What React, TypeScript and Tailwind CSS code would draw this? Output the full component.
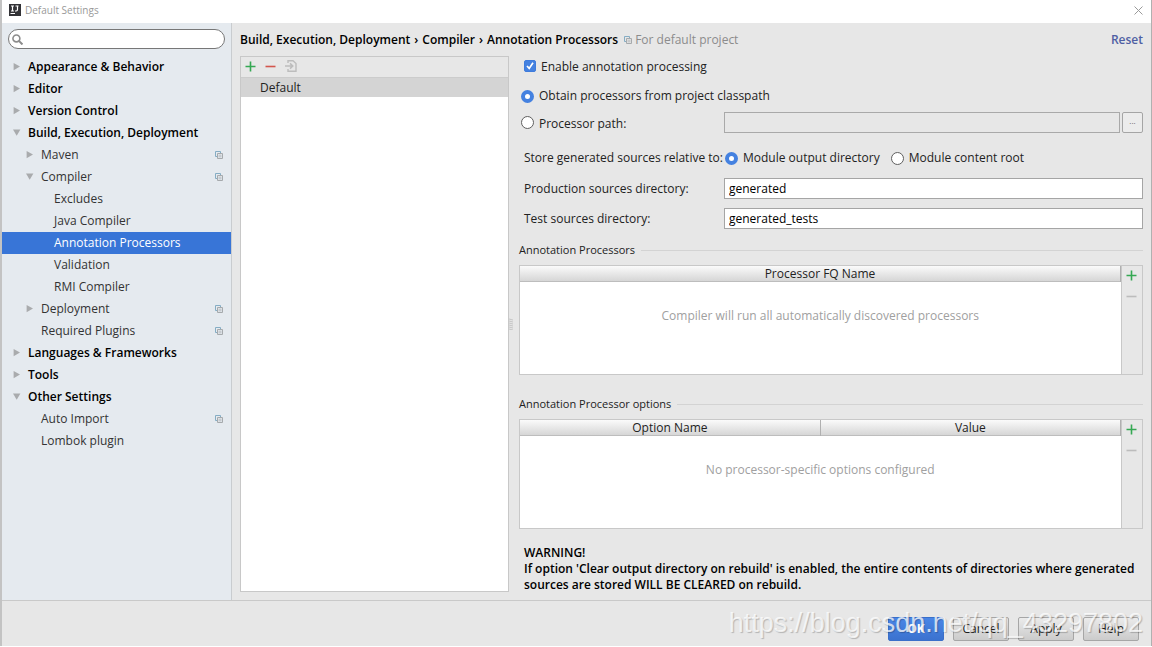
import React, { useState } from 'react';
import { memo, FC } from 'react';

type TreeItem = {
  name: string;
  level: number;
  arrow?: 'open' | 'closed';
  project?: boolean;
};

const treeItems: TreeItem[] = [
  { name: 'Appearance & Behavior', level: 0, arrow: 'closed' },
  { name: 'Editor', level: 0, arrow: 'closed' },
  { name: 'Version Control', level: 0, arrow: 'closed' },
  { name: 'Build, Execution, Deployment', level: 0, arrow: 'open' },
  { name: 'Maven', level: 1, arrow: 'closed', project: true },
  { name: 'Compiler', level: 1, arrow: 'open', project: true },
  { name: 'Excludes', level: 2 },
  { name: 'Java Compiler', level: 2 },
  { name: 'Annotation Processors', level: 2 },
  { name: 'Validation', level: 2 },
  { name: 'RMI Compiler', level: 2 },
  { name: 'Deployment', level: 1, arrow: 'closed', project: true },
  { name: 'Required Plugins', level: 1, project: true },
  { name: 'Languages & Frameworks', level: 0, arrow: 'closed' },
  { name: 'Tools', level: 0, arrow: 'closed' },
  { name: 'Other Settings', level: 0, arrow: 'open' },
  { name: 'Auto Import', level: 1, project: true },
  { name: 'Lombok plugin', level: 1 },
];

const levelPadding = ['pl-[11px]', 'pl-[24px]', 'pl-[37px]'];

const Arrow: FC<{ state?: 'open' | 'closed' }> = ({ state }) => (
  <svg className="w-2 h-2 shrink-0 fill-[#a9abad]" viewBox="0 0 8 8">
    {state === 'open' && <path d="M0 0.4h7.4L3.7 6.8z" />}
    {state === 'closed' && <path d="M0.6 0v7.2L7 3.6z" />}
  </svg>
);

const ProjectIcon: FC = () => (
  <svg className="w-2 h-2 shrink-0" viewBox="0 0 8 8" fill="none">
    <path d="M2 5.5H0.5v-5h5V2" stroke="#85adc4" />
    <path d="M2.5 2.5h5v5h-5z" stroke="#a6aaad" />
    <path d="M3.5 4.2h3M3.5 5.8h3" stroke="#a6aaad" strokeWidth="0.7" />
  </svg>
);

const PlusIcon: FC = () => (
  <svg className="w-[11px] h-[11px]" viewBox="0 0 11 11">
    <path d="M5.5 0.5v10M0.5 5.5h10" stroke="#35a853" strokeWidth="1.6" />
  </svg>
);

const MinusIcon: FC<{ color: string }> = ({ color }) => (
  <svg className="w-[11px] h-[11px]" viewBox="0 0 11 11">
    <path d="M0.5 5.5h10" stroke={color} strokeWidth="1.6" />
  </svg>
);

const radioClass =
  'appearance-none w-[13px] h-[13px] shrink-0 rounded-full border border-[#5f5f5f] bg-white checked:border-[4px] checked:border-[#4481e0]';
const inputClass =
  'w-full min-w-0 h-[21px] px-1 border border-[#a5a5a5] bg-white text-black outline-none';

const SectionTitle: FC<{ title: string }> = ({ title }) => (
  <div className="flex items-center gap-1.5 h-[18px] mb-1.5 text-[11px]">
    <h2>{title}</h2>
    <div className="flex-1 border-t border-[#d3d3d3]" />
  </div>
);

const DataTable: FC<{ columns: string[]; empty: string }> = ({ columns, empty }) => (
  <div className="flex h-[110px] border border-[#c8c8c8]">
    <div className="flex-1 bg-white">
      <table className="w-full table-fixed border-collapse">
        <thead>
          <tr className="h-[15px] bg-linear-to-b from-[#fbfbfb] to-[#d6d6d6] border-b border-[#bdbdbd]">
            {columns.map((column) => (
              <th
                key={column}
                className="p-0 leading-[15px] font-normal border-r border-[#b0b0b0]"
              >
                {column}
              </th>
            ))}
          </tr>
        </thead>
        <tbody>
          <tr>
            <td colSpan={columns.length} className="pt-[26px] text-center text-[#a0a0a0]">
              {empty}
            </td>
          </tr>
        </tbody>
      </table>
    </div>
    <div className="flex flex-col items-center w-[21px] pt-1 pr-0.5 gap-[10px] border-l border-[#c8c8c8]">
      <button aria-label="Add">
        <PlusIcon />
      </button>
      <button aria-label="Remove">
        <MinusIcon color="#bcbcbc" />
      </button>
    </div>
  </div>
);

const TitleBar: FC = () => (
  <header className="flex items-center h-[23px] pl-[7px] pr-2 pb-[3px] bg-white">
    <svg className="w-3 h-3 mr-1" viewBox="0 0 12 12">
      <rect width="12" height="12" fill="#323236" />
      <path
        d="M2 2h3M3.5 2v5M2 7h3M6.5 2h3M8.5 2v3.6Q8.5 7 7.2 7H6"
        fill="none"
        stroke="#fff"
        strokeWidth="1.2"
      />
      <rect x="1.5" y="9" width="4.5" height="1" fill="#fff" />
    </svg>
    <h1 className="flex-1 text-[10px] text-[#999999]">Default Settings</h1>
    <button aria-label="Close">
      <svg className="w-[9px] h-[9px]" viewBox="0 0 9 9">
        <path d="M0.5 0.5l8 8M8.5 0.5l-8 8" stroke="#9a9a9a" />
      </svg>
    </button>
  </header>
);

const Sidebar: FC<{ selected: string; onSelect: (name: string) => void }> = ({
  selected,
  onSelect,
}) => (
  <aside className="w-[230px] shrink-0 bg-[#e5eaef] border-r border-[#c9cccf]">
    <label className="flex items-center h-5 mx-1.5 mt-1.5 mb-[7px] pl-[3px] rounded-full border border-[#777777] bg-white">
      <svg className="w-[11px] h-[11px] shrink-0" viewBox="0 0 12 12" fill="none" stroke="#8c8c8c">
        <circle cx="4.8" cy="4.8" r="3.8" strokeWidth="1.7" />
        <path d="M7.5 7.5l3.9 3.9" strokeWidth="2.2" />
      </svg>
      <input className="flex-1 min-w-0 px-1 outline-none" aria-label="Search settings" />
    </label>
    <ul>
      {treeItems.map((item) => (
        <li key={item.name}>
          <button
            className={`flex items-center gap-[7px] w-full h-[22px] pr-2 text-left ${
              levelPadding[item.level]
            } ${item.level === 0 ? 'font-semibold text-black' : ''} ${
              item.name === selected ? 'bg-[#3875d7] text-white' : 'text-[#333333]'
            }`}
            onClick={() => onSelect(item.name)}
          >
            <Arrow state={item.arrow} />
            <span className="flex-1 whitespace-nowrap">{item.name}</span>
            {item.project && <ProjectIcon />}
          </button>
        </li>
      ))}
    </ul>
  </aside>
);

const ProfileList: FC = () => (
  <section className="w-[269px] shrink-0 mb-2 border border-[#c8c8c8] bg-white">
    <div className="flex items-center gap-[9px] h-[21px] pl-1 pb-0.5 bg-[#e7e7e7] border-b border-[#cccccc]">
      <button aria-label="Add profile">
        <PlusIcon />
      </button>
      <button aria-label="Remove profile">
        <MinusIcon color="#d3564d" />
      </button>
      <button aria-label="Move to">
        <svg className="w-3 h-3" viewBox="0 0 12 12" fill="none" stroke="#bdbdbd">
          <path d="M3 3V0.8h5L11 3.5v7.7H3V9" strokeWidth="1.4" />
          <path d="M0 6h7M5 3.4L7.7 6 5 8.6" strokeWidth="1.6" />
        </svg>
      </button>
    </div>
    <div className="h-[19px] pl-[19px] leading-5 bg-[#d4d4d4]">Default</div>
  </section>
);

const ProcessorForm: FC = () => {
  const [enabled, setEnabled] = useState(true);
  const [source, setSource] = useState('classpath');
  const [relative, setRelative] = useState('output');

  return (
    <section className="flex-1 min-w-0">
      <label className="flex items-center gap-[5px] h-5 pl-[5px]">
        <input
          type="checkbox"
          className="peer sr-only"
          checked={enabled}
          onChange={() => setEnabled(!enabled)}
        />
        <svg
          className="w-3 h-3 shrink-0 rounded-xs border border-[#777777] bg-white peer-checked:border-[#3e7bdc] peer-checked:bg-[#4481e0]"
          viewBox="0 0 10 10"
        >
          <path d="M2 5l2.2 2.4L8 1.8" fill="none" stroke="#fff" strokeWidth="1.7" />
        </svg>
        <span className="pt-0.5">Enable annotation processing</span>
      </label>
      <label className="flex items-center gap-[5px] h-5 mt-[10px] pl-0.5">
        <input
          type="radio"
          name="source"
          className={radioClass}
          checked={source === 'classpath'}
          onChange={() => setSource('classpath')}
        />
        <span>Obtain processors from project classpath</span>
      </label>
      <div className="flex mt-1.5">
        <label className="flex items-center gap-[5px] w-[205px] shrink-0 pl-0.5">
          <input
            type="radio"
            name="source"
            className={radioClass}
            checked={source === 'path'}
            onChange={() => setSource('path')}
          />
          <span className="pt-0.5">Processor path:</span>
        </label>
        <input
          className="flex-1 min-w-0 h-[21px] px-1 border border-[#a9a9a9] bg-[#e7e7e7]"
          aria-label="Processor path"
          disabled={source !== 'path'}
        />
        <button
          className="flex justify-center items-center w-[21px] h-[21px] ml-0.5 pb-1 border border-[#a5a5a5] rounded-xs bg-[#ececec] text-[#666666] text-[8px]"
          aria-label="Browse"
        >
          ...
        </button>
      </div>
      <div className="flex items-center h-5 mt-[15px]">
        <span className="w-[206px] shrink-0 pl-[5px]">Store generated sources relative to:</span>
        <label className="flex items-center gap-[5px] mr-[11px]">
          <input
            type="radio"
            name="relative"
            className={radioClass}
            checked={relative === 'output'}
            onChange={() => setRelative('output')}
          />
          Module output directory
        </label>
        <label className="flex items-center gap-[5px]">
          <input
            type="radio"
            name="relative"
            className={radioClass}
            checked={relative === 'content'}
            onChange={() => setRelative('content')}
          />
          Module content root
        </label>
      </div>
      <div className="flex items-center mt-[10px]">
        <label htmlFor="production" className="w-[205px] shrink-0 pl-[5px]">
          Production sources directory:
        </label>
        <input id="production" className={inputClass} defaultValue="generated" />
      </div>
      <div className="flex items-center mt-[9px] mb-3">
        <label htmlFor="test" className="w-[205px] shrink-0 pl-[5px]">
          Test sources directory:
        </label>
        <input id="test" className={inputClass} defaultValue="generated_tests" />
      </div>

      <SectionTitle title="Annotation Processors" />
      <DataTable
        columns={['Processor FQ Name']}
        empty="Compiler will run all automatically discovered processors"
      />
      <div className="h-5" />
      <SectionTitle title="Annotation Processor options" />
      <DataTable
        columns={['Option Name', 'Value']}
        empty="No processor-specific options configured"
      />

      <p className="mt-4 pl-[5px] font-semibold leading-4 text-black">
        WARNING!
        <br />
        If option 'Clear output directory on rebuild' is enabled, the entire contents of
        directories where generated sources are stored WILL BE CLEARED on rebuild.
      </p>
    </section>
  );
};

const buttonClass =
  'w-14 h-6 rounded-xs border border-[#a6a6a6] bg-linear-to-b from-[#ebebeb] to-[#cbcbcb] text-[#222222]';

const Footer: FC = memo(() => (
  <footer className="relative flex justify-end gap-[9px] pt-4 pb-[5px] pr-3 border-t border-[#c9c9c9]">
    <button className="w-14 h-6 rounded-xs border border-[#3a6fc9] bg-linear-to-b from-[#4a86e6] to-[#3b72cf] font-bold text-white">
      OK
    </button>
    <button className={buttonClass}>Cancel</button>
    <button className={buttonClass}>Apply</button>
    <button className={buttonClass}>Help</button>
    <div className="absolute right-2 top-2 font-['Liberation_Sans',sans-serif] text-[27px] leading-7 text-white/75 text-shadow-[1px_1px_1px_#00000038] pointer-events-none">
      https://blog.csdn.net/qq_43297802
    </div>
  </footer>
));

export default function App() {
  const [selected, setSelected] = useState('Annotation Processors');

  return (
    <div className="flex flex-col min-h-screen pb-px bg-white font-['Open_Sans','Noto_Sans',sans-serif] text-[12px] leading-4 text-[#222222]">
      <div className="flex flex-col flex-1 border-l-2 border-r border-l-[#c3c3c3] border-r-[#b0b0b0] bg-[#e7e7e7]">
        <TitleBar />
        <div className="flex flex-1">
          <Sidebar selected={selected} onSelect={setSelected} />
          <main className="flex flex-col flex-1 min-w-0 px-2">
            <div className="flex items-center h-[33px]">
              <h2 className="flex gap-1 font-semibold text-black">
                <span>Build, Execution, Deployment</span>
                <span>›</span>
                <span>Compiler</span>
                <span>›</span>
                <span>Annotation Processors</span>
              </h2>
              <div className="flex items-center gap-[3px] ml-1.5 text-[#8c8c8c]">
                <ProjectIcon />
                <span>For default project</span>
              </div>
              <a href="#reset" className="ml-auto font-semibold text-[#4f5fa3]">
                Reset
              </a>
            </div>
            <div className="flex flex-1">
              <ProfileList />
              {/* splitter grip */}
              <div className="flex items-center w-[10px] shrink-0 pb-2">
                <svg className="w-1 h-3" viewBox="0 0 4 12" stroke="#bcbcbc">
                  <path d="M0 1l4 1M0 3l4 1M0 5l4 1M0 7l4 1M0 9l4 1M0 11l4 1" strokeWidth="0.8" />
                </svg>
              </div>
              <ProcessorForm />
            </div>
          </main>
        </div>
        <Footer />
      </div>
    </div>
  );
}
